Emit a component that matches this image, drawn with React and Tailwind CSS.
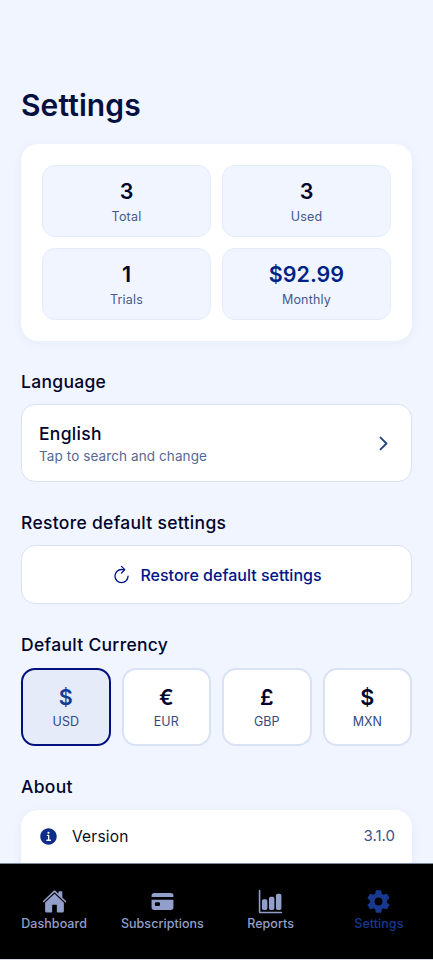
import React from 'react';
import {
    IoHome,
    IoCard,
    IoBarChart,
    IoSettingsSharp,
    IoInformationCircle,
    IoChevronForward,
    IoRefresh,
} from 'react-icons/io5';

const stats = [
    { value: '3', label: 'Total' },
    { value: '3', label: 'Used' },
    { value: '1', label: 'Trials' },
    { value: '$92.99', label: 'Monthly', highlight: true },
];

const currencies = [
    { symbol: '$', code: 'USD' },
    { symbol: '€', code: 'EUR' },
    { symbol: '£', code: 'GBP' },
    { symbol: '$', code: 'MXN' },
];

const tabs = [
    { label: 'Dashboard', icon: IoHome },
    { label: 'Subscriptions', icon: IoCard },
    { label: 'Reports', icon: IoBarChart },
    { label: 'Settings', icon: IoSettingsSharp },
];

const SectionTitle = ({ children }) => (
    <h2 className="h-6 leading-6 text-[17.5px] font-medium tracking-[0.3px] text-[#02042b]">{children}</h2>
);

const StatTile = ({ value, label, highlight }) => (
    <div className="h-[72px] pt-[11px] rounded-[13px] border border-[#e4ebfa] bg-[#f0f5ff] text-center">
        <p className={`h-[29px] leading-[29px] text-[21.5px] font-semibold ${highlight ? 'text-[#001f87]' : 'text-[#02042b]'}`}>
            {value}
        </p>
        <p className="h-[21px] leading-[21px] text-[12.5px] tracking-[0.2px] text-[#46598c]">{label}</p>
    </div>
);

const TabBar = ({ active }) => (
    <nav className="h-[97px] shrink-0 pt-[25px] flex bg-black border-t border-[#7d8799] border-b border-b-[#d5dae3]">
        {tabs.map(({ label, icon: Icon }) => (
            <button
                key={label}
                className={`flex-1 flex flex-col items-center ${label === active ? 'text-[#17398f]' : 'text-[#929fca]'}`}
            >
                <Icon size={25} />
                <span className="h-[20px] leading-[20px] text-[12.5px] font-medium tracking-[0.05px]">{label}</span>
            </button>
        ))}
    </nav>
);

const App = () => {
    return (
        <div className="w-[433px] h-[960px] flex flex-col overflow-hidden bg-[#f0f5ff] font-['Inter',sans-serif]">
            <main className="flex-1 min-h-0 overflow-hidden px-[21px] pt-[85px]">
                <h1 className="h-10 leading-10 text-[30px] font-semibold tracking-[0.1px] text-[#06103f]">Settings</h1>

                {/* Usage stats */}
                <section className="mt-[19px] h-[197px] p-[21px] grid grid-cols-2 gap-[11px] content-start rounded-[17px] bg-white shadow-[0_2px_12px_rgba(0,32,135,0.05)]">
                    {stats.map((stat) => (
                        <StatTile key={stat.label} {...stat} />
                    ))}
                </section>

                {/* Language */}
                <section className="mt-[29px]">
                    <SectionTitle>Language</SectionTitle>
                    <button className="mt-[10px] w-full h-[78px] pl-[17px] pr-[17px] flex items-center justify-between rounded-[14px] border border-[#d9e1f5] bg-white text-left">
                        <span className="pt-[3px] flex flex-col">
                            <span className="h-[24px] leading-[24px] text-[17.5px] font-medium tracking-[0.3px] text-[#02042b]">English</span>
                            <span className="h-[21px] leading-[21px] text-[13.5px] tracking-[0.1px] text-[#566894]">Tap to search and change</span>
                        </span>
                        <IoChevronForward size={21} className="text-[#2d4680]" />
                    </button>
                </section>

                {/* Restore */}
                <section className="mt-[29px]">
                    <SectionTitle>Restore default settings</SectionTitle>
                    <button className="mt-[10px] w-full h-[59px] flex items-center justify-center gap-[8px] rounded-[14px] border border-[#d9e1f5] bg-white text-[16px] font-medium text-[#001489]">
                        <IoRefresh size={21} />
                        Restore default settings
                    </button>
                </section>

                {/* Currency */}
                <section className="mt-[29px]">
                    <SectionTitle>Default Currency</SectionTitle>
                    <div className="mt-[11px] grid grid-cols-4 gap-[11px]">
                        {currencies.map(({ symbol, code }) => (
                            <button
                                key={code}
                                className={`h-[78px] flex flex-col items-center pt-[13px] rounded-[14px] border-2 ${code === 'USD' ? 'border-[#001080] bg-[#e5ebf8]' : 'border-[#d9e1f5] bg-white'}`}
                            >
                                <span className={`h-[28px] leading-[28px] text-[21.5px] font-semibold ${code === 'USD' ? 'text-[#173a94]' : 'text-[#02042b]'}`}>
                                    {symbol}
                                </span>
                                <span className="h-[22px] leading-[22px] text-[12.5px] text-[#35497f]">{code}</span>
                            </button>
                        ))}
                    </div>
                </section>

                {/* About */}
                <section className="mt-[29px]">
                    <SectionTitle>About</SectionTitle>
                    <div className="mt-[11px] h-[120px] px-[17px] rounded-[17px] bg-white shadow-[0_2px_12px_rgba(0,32,135,0.05)]">
                        <div className="h-[53px] flex items-center text-[15.5px]">
                            <IoInformationCircle size={21} className="text-[#112d8a]" />
                            <span className="ml-[13px] tracking-[0.2px] text-[#0a0c24]">Version</span>
                            <span className="ml-auto text-[15px] text-[#3c5087]">3.1.0</span>
                        </div>
                    </div>
                </section>
            </main>

            <TabBar active="Settings" />
        </div>
    );
};

export default App;
